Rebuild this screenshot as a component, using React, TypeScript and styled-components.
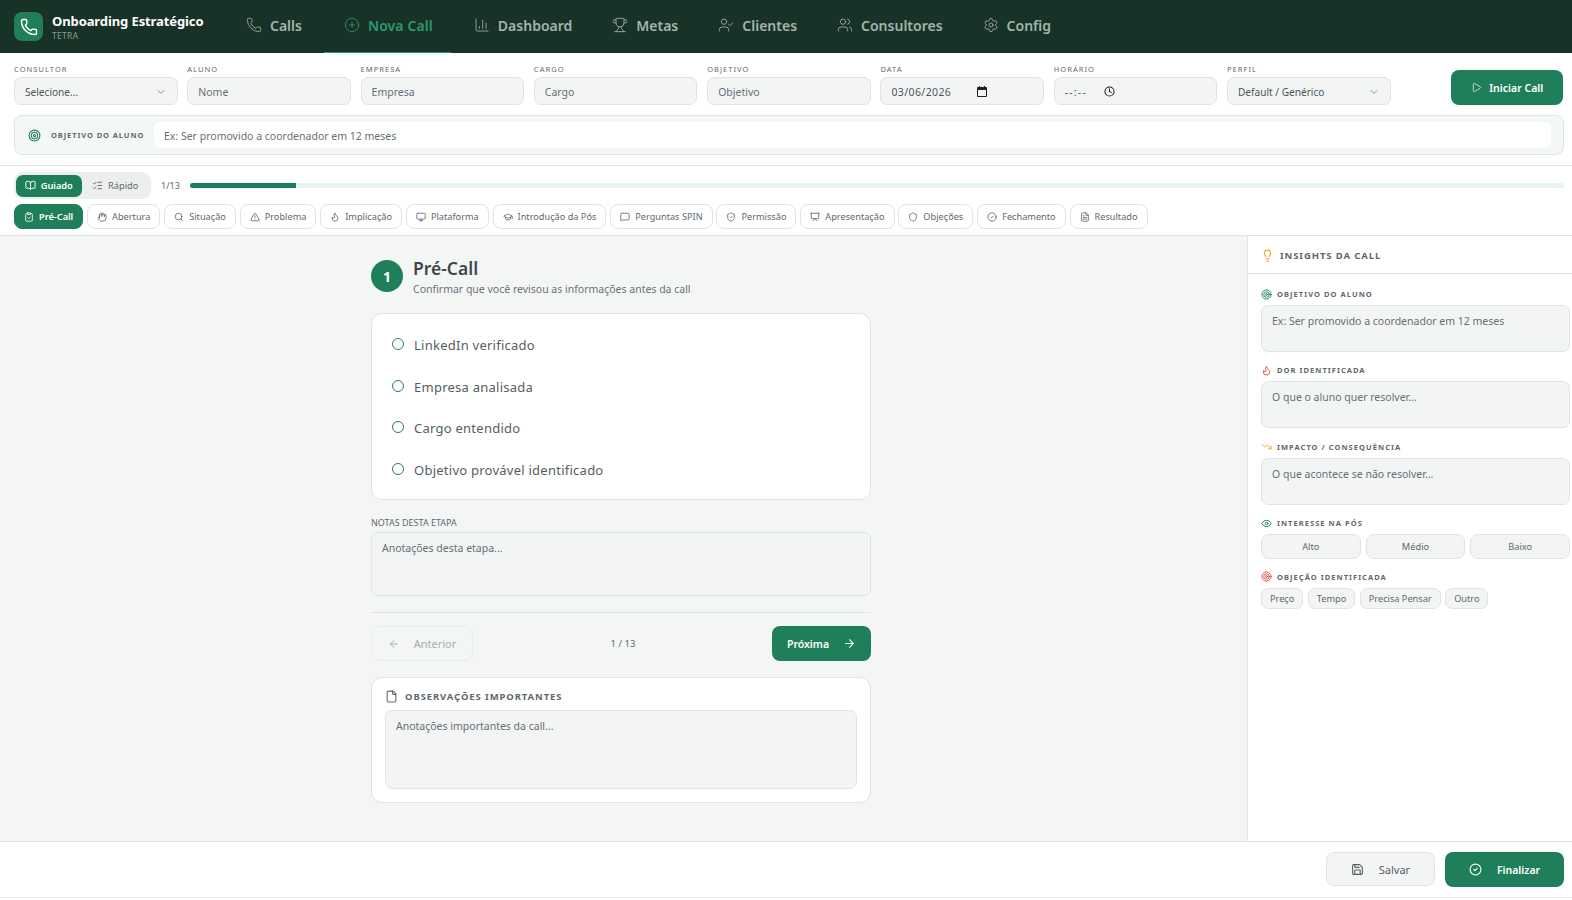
import React from 'react';
import styled, {createGlobalStyle} from 'styled-components';
import {
  ArrowLeft,
  ArrowRight,
  BookOpen,
  ChartColumn,
  ChevronDown,
  CircleCheck,
  CirclePlus,
  ClipboardCheck,
  Clock,
  Eye,
  File,
  FileText,
  Flame,
  GraduationCap,
  Hand,
  Lightbulb,
  ListChecks,
  LucideIcon,
  MessageSquare,
  Monitor,
  Phone,
  Play,
  Presentation,
  Save,
  Search,
  Settings,
  Shield,
  ShieldCheck,
  Target,
  TrendingDown,
  TriangleAlert,
  Trophy,
  UserCheck,
  Users,
} from 'lucide-react';

const GREEN = '#1f7f5b';
const FIELD_BG = '#f3f5f5';
const LINE = '#e0e4e4';

const GlobalStyle = createGlobalStyle`
  html, body {
    margin: 0;
    padding: 0;
    background: #fff;
  }
  * {
    box-sizing: border-box;
  }
  body, input, textarea, button {
    font-family: "Noto Sans", "Liberation Sans", sans-serif;
  }
  input::placeholder, textarea::placeholder {
    color: #666f75;
    opacity: 1;
  }
`;

const Page = styled.div`
  width: 1572px;
  height: 898px;
  display: flex;
  flex-direction: column;
  border-bottom: 1px solid #e9e9e4;
`;

const Nav = styled.nav`
  height: 53px;
  flex: none;
  background: #183228;
  display: flex;
  align-items: center;
  padding-left: 14px;
`;

const Brand = styled.div`
  width: 222px;
  display: flex;
  align-items: center;
  gap: 9px;
`;

const BrandIcon = styled.div`
  width: 29px;
  height: 29px;
  border-radius: 8px;
  background: ${GREEN};
  color: #fff;
  display: flex;
  align-items: center;
  justify-content: center;
`;

const BrandText = styled.div`
  display: flex;
  flex-direction: column;
  margin-top: 1px;
`;

const BrandName = styled.span`
  font-size: 13px;
  line-height: 16px;
  font-weight: 700;
  letter-spacing: -0.1px;
  color: #fff;
`;

const BrandSub = styled.span`
  font-size: 8.5px;
  line-height: 13px;
  letter-spacing: 0.3px;
  color: #8a9c95;
`;

const NavTabs = styled.div`
  display: flex;
  height: 100%;
  margin-left: -10px;
`;

const NavTab = styled.a<{$active?: boolean}>`
  height: 100%;
  padding: 0 ${p => (p.$active ? '18px' : '20px')} 2px 20px;
  margin-right: ${p => (p.$active ? '3px' : '0')};
  display: flex;
  align-items: center;
  gap: 8px;
  font-size: 14px;
  font-weight: 600;
  letter-spacing: ${p => (p.$active ? '0.1px' : '0')};
  color: ${p => (p.$active ? '#2a9a70' : '#a3b3ad')};
  border-bottom: 1px solid ${p => (p.$active ? '#2a9a70' : 'transparent')};
  &:first-child {
    padding-right: 22px;
  }
`;

const FormArea = styled.section`
  flex: none;
  height: 113px;
  padding: 10px 8px 0 14px;
  border-bottom: 1px solid ${LINE};
`;

const FieldsRow = styled.div`
  display: flex;
  align-items: flex-end;
  height: 42px;
`;

const FieldCol = styled.label`
  width: 163.6px;
  margin-right: 9.7px;
  display: flex;
  flex-direction: column;
  gap: 2px;
`;

const FieldLabel = styled.span`
  font-size: 7.5px;
  line-height: 11px;
  letter-spacing: 1.05px;
  color: #5f686e;
  text-transform: uppercase;
`;

const fieldBox = `
  width: 100%;
  height: 28px;
  background: ${FIELD_BG};
  border: 1px solid ${LINE};
  border-radius: 7px;
  padding: 1px 10px 0;
  font-size: 10.5px;
  color: #4c555b;
  outline: none;
`;

const FieldInput = styled.input`
  ${fieldBox}
`;

const FieldBox = styled.div<{$gap?: number; $spread?: boolean; $track?: number}>`
  ${fieldBox}
  font-size: ${p => (p.$spread ? '10.1px' : '10.5px')};
  letter-spacing: ${p => p.$track ?? 0}px;
  display: flex;
  align-items: center;
  gap: ${p => p.$gap ?? 0}px;
  justify-content: ${p => (p.$spread ? 'space-between' : 'flex-start')};
`;

const StartButton = styled.button`
  width: 112px;
  height: 35px;
  margin-left: 51px;
  background: ${GREEN};
  color: #fff;
  border: none;
  border-radius: 8px;
  font-size: 10.5px;
  font-weight: 600;
  display: flex;
  align-items: center;
  justify-content: center;
  gap: 7px;
`;

const GoalBar = styled.div`
  margin-top: 10px;
  height: 40px;
  background: #f3f8f6;
  border: 1px solid #dfe7e4;
  border-radius: 8px;
  display: flex;
  align-items: center;
  padding: 0 12px 0 13px;
`;

const GoalLabel = styled.span`
  margin-left: 10px;
  width: 103px;
  flex: none;
  font-size: 7.5px;
  font-weight: 700;
  letter-spacing: 0.9px;
  color: #5f686e;
  white-space: nowrap;
`;

const GoalInput = styled.input`
  flex: 1;
  height: 26px;
  border: none;
  border-radius: 6px;
  background: #fff;
  padding: 1px 10px 0;
  font-size: 10.5px;
  outline: none;
`;

const StepsArea = styled.section`
  flex: none;
  height: 70px;
  padding: 5px 8px 0 14px;
  border-bottom: 1px solid ${LINE};
`;

const ProgressRow = styled.div`
  height: 28px;
  display: flex;
  align-items: center;
`;

const ModeToggle = styled.div`
  width: 137px;
  height: 27px;
  padding: 3px 2px;
  border-radius: 9px;
  background: #edefef;
  display: flex;
`;

const ModeButton = styled.button<{$active?: boolean}>`
  height: 22px;
  width: ${p => (p.$active ? '66px' : '68px')};
  border: none;
  border-radius: 7px;
  background: ${p => (p.$active ? GREEN : 'transparent')};
  color: ${p => (p.$active ? '#fff' : '#5f686e')};
  font-size: 9.25px;
  font-weight: ${p => (p.$active ? 600 : 400)};
  display: flex;
  align-items: center;
  justify-content: center;
  gap: 5px;
  padding: 0;
`;

const Counter = styled.span`
  width: 29px;
  margin-left: 10px;
  font-size: 9px;
  color: #5f686e;
`;

const Track = styled.div`
  flex: 1;
  height: 5px;
  border-radius: 3px;
  background: #e6f3ee;
  overflow: hidden;
`;

const Fill = styled.div`
  height: 100%;
  background: ${GREEN};
`;

const StepTabs = styled.div`
  margin-top: 5px;
  display: flex;
  gap: 3.85px;
`;

const StepTab = styled.button<{$active?: boolean}>`
  height: 25px;
  padding: 0 9px;
  border-radius: 8px;
  border: 1px solid ${p => (p.$active ? GREEN : LINE)};
  background: ${p => (p.$active ? GREEN : '#fff')};
  color: ${p => (p.$active ? '#fff' : '#5f686e')};
  font-size: 9.2px;
  font-weight: ${p => (p.$active ? 600 : 400)};
  white-space: nowrap;
  display: flex;
  align-items: center;
  gap: 5px;
`;

const Body = styled.div`
  flex: 1;
  min-height: 0;
  display: flex;
`;

const Main = styled.main`
  width: 1247px;
  background: #f4f6f6;
  padding: 24px 5px 0 0;
  display: flex;
  justify-content: center;
`;

const Column = styled.div`
  width: 500px;
  display: flex;
  flex-direction: column;
`;

const StepHead = styled.header`
  display: flex;
  gap: 10px;
  height: 32px;
`;

const StepNumber = styled.div`
  width: 32px;
  height: 32px;
  border-radius: 50%;
  background: ${GREEN};
  color: #fff;
  font-size: 14px;
  font-weight: 700;
  display: flex;
  align-items: center;
  justify-content: center;
`;

const StepTitles = styled.div`
  display: flex;
  flex-direction: column;
  margin-top: -4px;
`;

const StepTitle = styled.h2`
  margin: 0;
  font-size: 17.5px;
  line-height: 24px;
  font-weight: 600;
  color: #3f474d;
`;

const StepSub = styled.p`
  margin: 0;
  font-size: 10.5px;
  line-height: 19px;
  color: #6a7379;
`;

const Card = styled.div`
  background: #fff;
  border: 1px solid ${LINE};
  border-radius: 11px;
`;

const CheckCard = styled(Card)`
  margin-top: 21px;
  height: 187px;
  padding: 10px 20px 8px;
  display: flex;
  flex-direction: column;
  justify-content: space-between;
`;

const CheckRow = styled.div`
  height: 41.7px;
  display: flex;
  align-items: center;
  gap: 10px;
  font-size: 13px;
  letter-spacing: 0.25px;
  color: #555e64;
`;

const CheckCircle = styled.span`
  width: 12px;
  height: 12px;
  margin-top: -2px;
  border-radius: 50%;
  border: 1.3px solid #2b7d64;
  flex: none;
`;

const NotesLabel = styled.div`
  margin-top: 17px;
  font-size: 9px;
  line-height: 12px;
  color: #5f686e;
`;

const Area = styled.textarea<{$h: number}>`
  display: block;
  width: 100%;
  height: ${p => p.$h}px;
  resize: none;
  background: ${FIELD_BG};
  border: 1px solid ${LINE};
  border-radius: 7px;
  padding: 8px 10px;
  font-size: 10.5px;
  line-height: 14px;
  outline: none;
`;

const NotesArea = styled(Area)`
  margin-top: 3px;
`;

const Pager = styled.div`
  margin-top: 16px;
  padding-top: 13px;
  border-top: 1px solid ${LINE};
  display: flex;
  align-items: center;
  justify-content: space-between;
`;

const PrevButton = styled.button`
  width: 102px;
  height: 35px;
  background: transparent;
  border: 1px solid #eaeded;
  border-radius: 8px;
  color: #a6adb1;
  font-size: 11px;
  display: flex;
  align-items: center;
  justify-content: center;
  gap: 14px;
`;

const PageCount = styled.span`
  font-size: 9.5px;
  color: #5f686e;
  margin-left: 1px;
`;

const NextButton = styled.button`
  width: 99px;
  height: 35px;
  background: ${GREEN};
  border: none;
  border-radius: 8px;
  color: #fff;
  font-size: 10.5px;
  font-weight: 600;
  display: flex;
  align-items: center;
  justify-content: center;
  gap: 14px;
`;

const ObsCard = styled(Card)`
  margin-top: 16px;
  height: 126px;
  padding: 10px 13px;
`;

const ObsTitle = styled.div`
  height: 16px;
  margin-bottom: 6px;
  display: flex;
  align-items: center;
  gap: 7px;
  font-size: 9.5px;
  font-weight: 700;
  letter-spacing: 0.9px;
  color: #5f686e;
`;

const Side = styled.aside`
  width: 325px;
  background: #fff;
  border-left: 1px solid ${LINE};
`;

const SideHead = styled.header`
  height: 38px;
  padding: 1px 0 0 13px;
  border-bottom: 1px solid ${LINE};
  display: flex;
  align-items: center;
  gap: 6px;
  font-size: 9.5px;
  font-weight: 700;
  letter-spacing: 0.9px;
  color: #5f686e;
`;

const SideBody = styled.div`
  padding: 14px 2px 0 13px;
`;

const Insight = styled.div`
  margin-bottom: 12.4px;
`;

const InsightLabel = styled.div`
  height: 12px;
  display: flex;
  align-items: center;
  gap: 5px;
  margin-bottom: 5px;
  font-size: 7.5px;
  font-weight: 700;
  letter-spacing: 1.05px;
  color: #5f686e;
`;

const LevelRow = styled.div`
  display: grid;
  grid-template-columns: repeat(3, 1fr);
  gap: 5px;
  margin-bottom: 11.5px;
`;

const LevelButton = styled.button`
  height: 25px;
  background: ${FIELD_BG};
  border: 1px solid ${LINE};
  border-radius: 8px;
  font-size: 9.25px;
  color: #5f686e;
`;

const ChipRow = styled.div`
  display: flex;
  gap: 4.5px;
`;

const Chip = styled.button`
  height: 21px;
  padding: 0 8px;
  background: ${FIELD_BG};
  border: 1px solid ${LINE};
  border-radius: 7px;
  font-size: 9.2px;
  color: #5f686e;
  white-space: nowrap;
`;

const Footer = styled.footer`
  flex: none;
  height: 56px;
  border-top: 1px solid ${LINE};
  background: #fff;
  padding: 10px 8px 0 0;
  display: flex;
  justify-content: flex-end;
  gap: 10px;
`;

const SaveButton = styled.button`
  width: 109px;
  height: 34px;
  background: ${FIELD_BG};
  border: 1px solid ${LINE};
  border-radius: 8px;
  color: #555e64;
  font-size: 11px;
  display: flex;
  align-items: center;
  justify-content: center;
  gap: 15px;
`;

const FinishButton = styled.button`
  width: 119px;
  height: 35px;
  background: ${GREEN};
  border: none;
  border-radius: 8px;
  color: #fff;
  font-size: 10.5px;
  font-weight: 600;
  display: flex;
  align-items: center;
  justify-content: center;
  gap: 15px;
`;

const navItems: [string, LucideIcon][] = [
  ['Calls', Phone],
  ['Nova Call', CirclePlus],
  ['Dashboard', ChartColumn],
  ['Metas', Trophy],
  ['Clientes', UserCheck],
  ['Consultores', Users],
  ['Config', Settings],
];

const stepItems: [string, LucideIcon][] = [
  ['Pré-Call', ClipboardCheck],
  ['Abertura', Hand],
  ['Situação', Search],
  ['Problema', TriangleAlert],
  ['Implicação', Flame],
  ['Plataforma', Monitor],
  ['Introdução da Pós', GraduationCap],
  ['Perguntas SPIN', MessageSquare],
  ['Permissão', ShieldCheck],
  ['Apresentação', Presentation],
  ['Objeções', Shield],
  ['Fechamento', CircleCheck],
  ['Resultado', FileText],
];

const checks = [
  'LinkedIn verificado',
  'Empresa analisada',
  'Cargo entendido',
  'Objetivo provável identificado',
];

const textFields: [string, string][] = [
  ['Aluno', 'Nome'],
  ['Empresa', 'Empresa'],
  ['Cargo', 'Cargo'],
  ['Objetivo', 'Objetivo'],
];

const insights: [string, string, LucideIcon, string][] = [
  ['OBJETIVO DO ALUNO', 'Ex: Ser promovido a coordenador em 12 meses', Target, GREEN],
  ['DOR IDENTIFICADA', 'O que o aluno quer resolver...', Flame, '#e0484d'],
  ['IMPACTO / CONSEQUÊNCIA', 'O que acontece se não resolver...', TrendingDown, '#eba91f'],
];

function App() {
  return (
    <Page>
      <GlobalStyle />
      <Nav>
        <Brand>
          <BrandIcon>
            <Phone size={18} strokeWidth={2} />
          </BrandIcon>
          <BrandText>
            <BrandName>Onboarding Estratégico</BrandName>
            <BrandSub>TETRA</BrandSub>
          </BrandText>
        </Brand>
        <NavTabs>
          {navItems.map(([label, Icon]) => (
            <NavTab key={label} $active={label === 'Nova Call'}>
              <Icon size={16} strokeWidth={1.25} />
              {label}
            </NavTab>
          ))}
        </NavTabs>
      </Nav>

      <FormArea>
        <FieldsRow>
          <FieldCol>
            <FieldLabel>Consultor</FieldLabel>
            <FieldBox $spread>
              Selecione...
              <ChevronDown size={12} color="#8b9399" />
            </FieldBox>
          </FieldCol>
          {textFields.map(([label, hint]) => (
            <FieldCol key={label}>
              <FieldLabel>{label}</FieldLabel>
              <FieldInput placeholder={hint} />
            </FieldCol>
          ))}
          <FieldCol>
            <FieldLabel>Data</FieldLabel>
            <FieldBox $gap={26} $track={0.4}>
              03/06/2026
              <svg width="10" height="11" viewBox="0 0 10 11">
                <path d="M2 0h1v1h4V0h1v1h1a1 1 0 0 1 1 1v8a1 1 0 0 1-1 1H1a1 1 0 0 1-1-1V2a1 1 0 0 1 1-1h1zM1 4v6h8V4z" fill="#222" />
              </svg>
            </FieldBox>
          </FieldCol>
          <FieldCol>
            <FieldLabel>Horário</FieldLabel>
            <FieldBox $gap={17} $track={1.2}>
              --:--
              <Clock size={11} color="#222" strokeWidth={2.2} />
            </FieldBox>
          </FieldCol>
          <FieldCol>
            <FieldLabel>Perfil</FieldLabel>
            <FieldBox $spread>
              Default / Genérico
              <ChevronDown size={12} color="#8b9399" />
            </FieldBox>
          </FieldCol>
          <StartButton>
            <Play size={11} strokeWidth={1.5} />
            Iniciar Call
          </StartButton>
        </FieldsRow>
        <GoalBar>
          <Target size={13} color={GREEN} />
          <GoalLabel>OBJETIVO DO ALUNO</GoalLabel>
          <GoalInput placeholder="Ex: Ser promovido a coordenador em 12 meses" />
        </GoalBar>
      </FormArea>

      <StepsArea>
        <ProgressRow>
          <ModeToggle>
            <ModeButton $active>
              <BookOpen size={11} />
              Guiado
            </ModeButton>
            <ModeButton>
              <ListChecks size={11} />
              Rápido
            </ModeButton>
          </ModeToggle>
          <Counter>1/13</Counter>
          <Track>
            <Fill style={{width: `${(1 / 13) * 100}%`}} />
          </Track>
        </ProgressRow>
        <StepTabs>
          {stepItems.map(([label, Icon], i) => (
            <StepTab key={label} $active={i === 0}>
              <Icon size={10} />
              {label}
            </StepTab>
          ))}
        </StepTabs>
      </StepsArea>

      <Body>
        <Main>
          <Column>
            <StepHead>
              <StepNumber>1</StepNumber>
              <StepTitles>
                <StepTitle>Pré-Call</StepTitle>
                <StepSub>Confirmar que você revisou as informações antes da call</StepSub>
              </StepTitles>
            </StepHead>
            <CheckCard>
              {checks.map(text => (
                <CheckRow key={text}>
                  <CheckCircle />
                  {text}
                </CheckRow>
              ))}
            </CheckCard>
            <NotesLabel>NOTAS DESTA ETAPA</NotesLabel>
            <NotesArea $h={64} placeholder="Anotações desta etapa..." />
            <Pager>
              <PrevButton>
                <ArrowLeft size={12} />
                Anterior
              </PrevButton>
              <PageCount>1 / 13</PageCount>
              <NextButton>
                Próxima
                <ArrowRight size={13} />
              </NextButton>
            </Pager>
            <ObsCard>
              <ObsTitle>
                <File size={13} />
                OBSERVAÇÕES IMPORTANTES
              </ObsTitle>
              <Area $h={79} placeholder="Anotações importantes da call..." />
            </ObsCard>
          </Column>
        </Main>
        <Side>
          <SideHead>
            <Lightbulb size={13} color="#eba91f" />
            INSIGHTS DA CALL
          </SideHead>
          <SideBody>
            {insights.map(([label, hint, Icon, color]) => (
              <Insight key={label}>
                <InsightLabel>
                  <Icon size={11} color={color} />
                  {label}
                </InsightLabel>
                <Area $h={47} placeholder={hint} />
              </Insight>
            ))}
            <InsightLabel>
              <Eye size={11} color={GREEN} />
              INTERESSE NA PÓS
            </InsightLabel>
            <LevelRow>
              <LevelButton>Alto</LevelButton>
              <LevelButton>Médio</LevelButton>
              <LevelButton>Baixo</LevelButton>
            </LevelRow>
            <InsightLabel>
              <Target size={11} color="#e0484d" />
              OBJEÇÃO IDENTIFICADA
            </InsightLabel>
            <ChipRow>
              <Chip>Preço</Chip>
              <Chip>Tempo</Chip>
              <Chip>Precisa Pensar</Chip>
              <Chip>Outro</Chip>
            </ChipRow>
          </SideBody>
        </Side>
      </Body>

      <Footer>
        <SaveButton>
          <Save size={13} />
          Salvar
        </SaveButton>
        <FinishButton>
          <CircleCheck size={13} />
          Finalizar
        </FinishButton>
      </Footer>
    </Page>
  );
}

export default App;
